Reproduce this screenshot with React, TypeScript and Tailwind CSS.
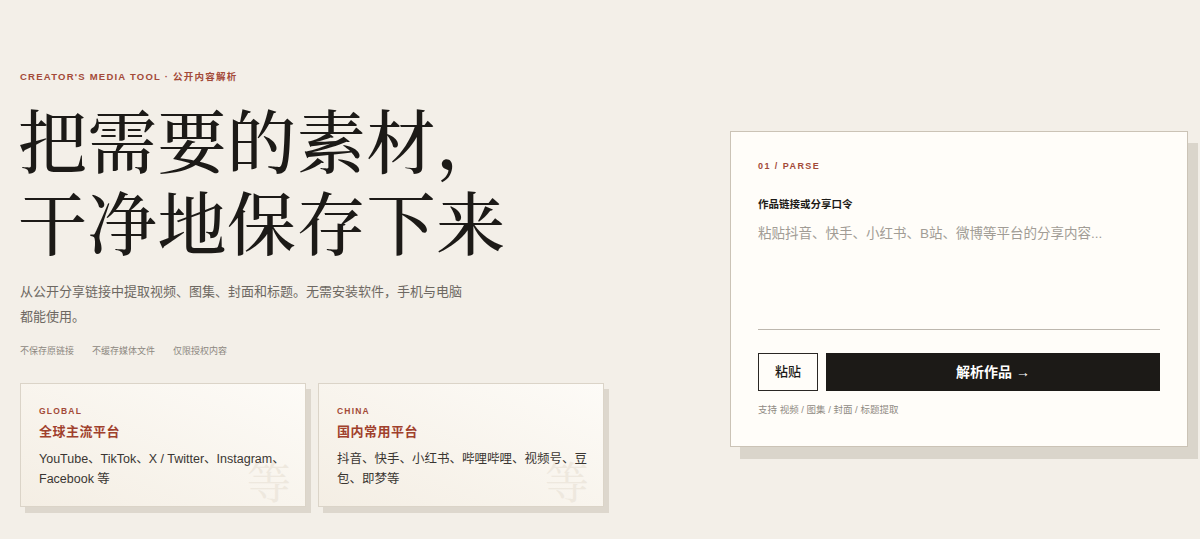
export default function App() {
  const sans = { fontFamily: '"Liberation Sans", "Noto Sans CJK SC", sans-serif' };
  const serif = { fontFamily: '"Noto Serif CJK SC", "Source Han Serif SC", "Noto Sans CJK SC", serif' };

  const platforms = [
    {
      tag: 'GLOBAL',
      title: '全球主流平台',
      desc: 'YouTube、TikTok、X / Twitter、Instagram、Facebook 等',
    },
    {
      tag: 'CHINA',
      title: '国内常用平台',
      desc: '抖音、快手、小红书、哔哩哔哩、视频号、豆包、即梦等',
    },
  ];

  return (
    <div className="w-[1200px] h-[539px] bg-[#f3efe8] overflow-hidden" style={sans}>
      <div className="flex items-start pl-5 pr-3">
        {/* left column */}
        <div className="w-[590px] pt-[71px]">
          <div className="text-[9.5px] leading-[12px] font-bold tracking-[0.13em] text-[#a34a38]">
            CREATOR&apos;S MEDIA TOOL · 公开内容解析
          </div>
          <h1
            className="mt-[15px] text-[69px] leading-[82px] font-medium tracking-[0.01em] text-[#1c1a17] -ml-[2px]"
            style={serif}
          >
            把需要的素材，
            <br />
            干净地保存下来
          </h1>
          <p className="mt-[17px] w-[450px] text-[13px] leading-[25px] text-[#6d6862]">
            从公开分享链接中提取视频、图集、封面和标题。无需安装软件，手机与电脑都能使用。
          </p>
          <div className="mt-[14px] flex gap-[18px] text-[9px] leading-[16px] text-[#8c8780]">
            <span>不保存原链接</span>
            <span>不缓存媒体文件</span>
            <span>仅限授权内容</span>
          </div>
          <div className="mt-[24px] flex gap-3">
            {platforms.map((p) => (
              <div
                key={p.tag}
                className="relative w-[286px] h-[124px] overflow-hidden border border-[#dbd4c8] bg-gradient-to-bl from-[#fdfbf7] to-[#f4eee4] pl-[18px] pr-4 pt-[21px] shadow-[5px_6px_0_#ddd7cd]"
              >
                <span
                  className="absolute right-[14px] bottom-[4px] text-[44px] leading-none text-[#eee8de]"
                  style={serif}
                >
                  等
                </span>
                <div className="relative text-[8.5px] leading-[12px] font-bold tracking-[0.14em] text-[#a34a38]">
                  {p.tag}
                </div>
                <div className="relative mt-[6px] text-[13px] leading-[18px] font-bold tracking-[0.04em] text-[#a0402c]">
                  {p.title}
                </div>
                <p className="relative mt-[8px] w-[252px] text-[12.5px] leading-[20px] text-[#3a3632]">
                  {p.desc}
                </p>
              </div>
            ))}
          </div>
        </div>

        {/* right card */}
        <div className="ml-auto mt-[131px] w-[458px] border border-[#cbc3b6] bg-[#fffdf9] px-[27px] pt-[28px] pb-[29px] shadow-[10px_12px_0_#dad5cb]">
          <div className="text-[9px] leading-[12px] font-bold tracking-[0.16em] text-[#a34a38]">
            01 / PARSE
          </div>
          <div className="mt-[24px] text-[10.5px] leading-[16px] font-bold text-[#1c1a17]">
            作品链接或分享口令
          </div>
          <div className="mt-[12px] h-[105px] text-[13.5px] leading-[20px] text-[#a19c95]">
            粘贴抖音、快手、小红书、B站、微博等平台的分享内容...
          </div>
          <div className="h-px bg-[#bdb7ae]" />
          <div className="mt-[23px] flex gap-2">
            <button className="w-[60px] h-[38px] border border-[#2a2724] bg-[#fffdf9] text-[13px] font-medium text-[#1c1a17]">
              粘贴
            </button>
            <button className="flex-1 h-[38px] bg-[#1c1a17] text-[14px] font-bold text-white">
              解析作品 →
            </button>
          </div>
          <div className="mt-[12px] text-[9.5px] leading-[14px] text-[#8f8a83]">
            支持 视频 / 图集 / 封面 / 标题提取
          </div>
        </div>
      </div>
    </div>
  );
}
